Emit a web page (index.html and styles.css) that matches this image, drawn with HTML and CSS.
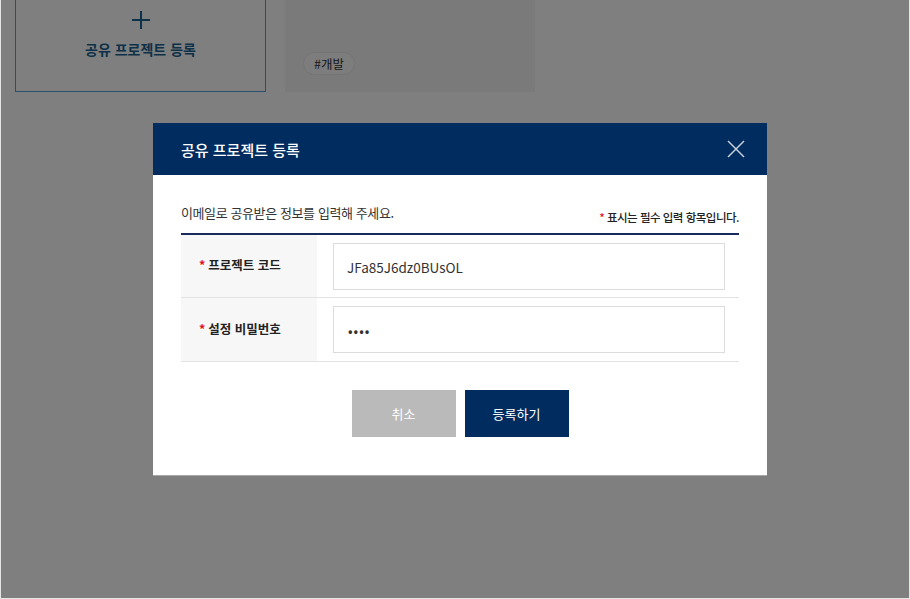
FILE: index.html
```html
<!DOCTYPE html>
<html lang="ko">
<head>
<meta charset="utf-8">
<link rel="stylesheet" href="styles.css">
</head>
<body>
<div class="frame">
  <div class="page">
    <div class="card card-add">
      <svg class="plus" width="18" height="18" viewBox="0 0 18 18"><path d="M9 0V18M0 9H18" stroke="currentColor" stroke-width="2"/></svg>
      <div class="add-text">공유 프로젝트 등록</div>
    </div>
    <div class="card card-project">
      <span class="tag">#개발</span>
    </div>
  </div>
  <div class="overlay">
    <div class="modal">
      <div class="modal-head">
        <h2 class="modal-title">공유 프로젝트 등록</h2>
        <svg class="close" width="18" height="18" viewBox="0 0 18 18"><path d="M1 1L17 17M17 1L1 17" stroke="#c8d0dc" stroke-width="1.5"/></svg>
      </div>
      <div class="modal-body">
        <div class="intro-row">
          <p class="intro">이메일로 공유받은 정보를 입력해 주세요.</p>
          <p class="note"><span class="req">*</span> 표시는 필수 입력 항목입니다.</p>
        </div>
        <div class="form-table">
          <div class="form-row">
            <div class="label"><span class="req">*</span> 프로젝트 코드</div>
            <div class="field"><div class="input">JFa85J6dz0BUsOL</div></div>
          </div>
          <div class="form-row">
            <div class="label"><span class="req">*</span> 설정 비밀번호</div>
            <div class="field"><div class="input pw">••••</div></div>
          </div>
        </div>
        <div class="buttons">
          <button class="btn btn-cancel">취소</button>
          <button class="btn btn-ok">등록하기</button>
        </div>
      </div>
    </div>
  </div>
</div>
</body>
</html>
```
FILE: styles.css
```css
* { box-sizing: border-box; }
html, body { margin: 0; padding: 0; }
body {
  font-family: "Noto Sans CJK KR", "Noto Sans", sans-serif;
  width: 910px;
  height: 599px;
  overflow: hidden;
}
.frame {
  position: relative;
  width: 910px;
  height: 599px;
  border: 1px solid #e6e6e6;
  border-top: 0;
  background: #fff;
}
.page {
  display: flex;
  gap: 19px;
  padding-left: 14px;
}
.card {
  width: 251px;
  height: 92px;
}
.card-add {
  border: 1px solid #4aa0dc;
  border-top: 0;
  display: flex;
  flex-direction: column;
  align-items: center;
  color: #1a6290;
  padding-top: 11px;
}
.plus { display: block; }
.add-text {
  margin-top: 10px;
  font-size: 14px;
  font-weight: 700;
  line-height: 20px;
}
.card-project {
  width: 250px;
  background: #f5f5f5;
  padding: 50px 0 0 18px;
}
.tag {
  display: inline-block;
  height: 23px;
  line-height: 21px;
  padding: 0 10px;
  font-size: 12.5px;
  color: #333;
  background: #fbfbfb;
  border: 1px solid #e8e8e8;
  border-radius: 12px;
}
.overlay {
  position: absolute;
  inset: 0;
  background: rgba(0, 0, 0, 0.5);
  display: flex;
  justify-content: flex-start;
  padding: 123px 0 0 152px;
}
.modal {
  width: 614px;
  height: 353px;
  background: #fff;
  border-bottom: 1px solid #a8a8a8;
}
.modal-head {
  height: 52px;
  background: #002c5f;
  display: flex;
  align-items: center;
  justify-content: space-between;
  padding: 0 22px 0 28px;
}
.modal-title {
  margin: 0;
  color: #fff;
  font-size: 15px;
  font-weight: 500;
}
.modal-body {
  padding: 0 28px;
}
.intro-row {
  display: flex;
  justify-content: space-between;
  align-items: flex-end;
  padding-top: 27px;
  height: 58px;
  padding-bottom: 8px;
}
.intro {
  margin: 0;
  font-size: 13px;
  letter-spacing: -0.4px;
  color: #333;
  line-height: 20px;
  position: relative;
  top: -2px;
}
.note {
  margin: 0;
  font-size: 11.5px;
  letter-spacing: -0.5px;
  font-weight: 500;
  color: #222;
  line-height: 16px;
}
.req { color: #e3141b; }
.form-table {
  border-top: 2px solid #1b2a5c;
}
.form-row {
  display: flex;
  height: 63px;
  border-bottom: 1px solid #e3e3e3;
}
.form-row + .form-row { height: 64px; }
.label {
  width: 136px;
  background: #f7f7f7;
  font-size: 12.5px;
  font-weight: 700;
  color: #222;
  display: flex;
  align-items: center;
  padding: 0 0 3px 18px;
  gap: 3px;
}
.field {
  flex: 1;
  padding: 8px 14px 0 16px;
}
.input {
  height: 47px;
  border: 1px solid #dcdcdc;
  font-size: 13.5px;
  color: #333;
  display: flex;
  align-items: center;
  padding-left: 13px;
}
.pw { font-size: 13.5px; letter-spacing: 1px; padding-left: 14px; }
.buttons {
  display: flex;
  justify-content: center;
  gap: 9px;
  padding-top: 28px;
}
.btn {
  width: 104px;
  height: 47px;
  border: 0;
  font-family: inherit;
  font-size: 13px;
  color: #fff;
  padding: 0;
}
.btn-cancel { background: #bababa; }
.btn-ok { background: #002c5f; }
.close { display: block; }
```
